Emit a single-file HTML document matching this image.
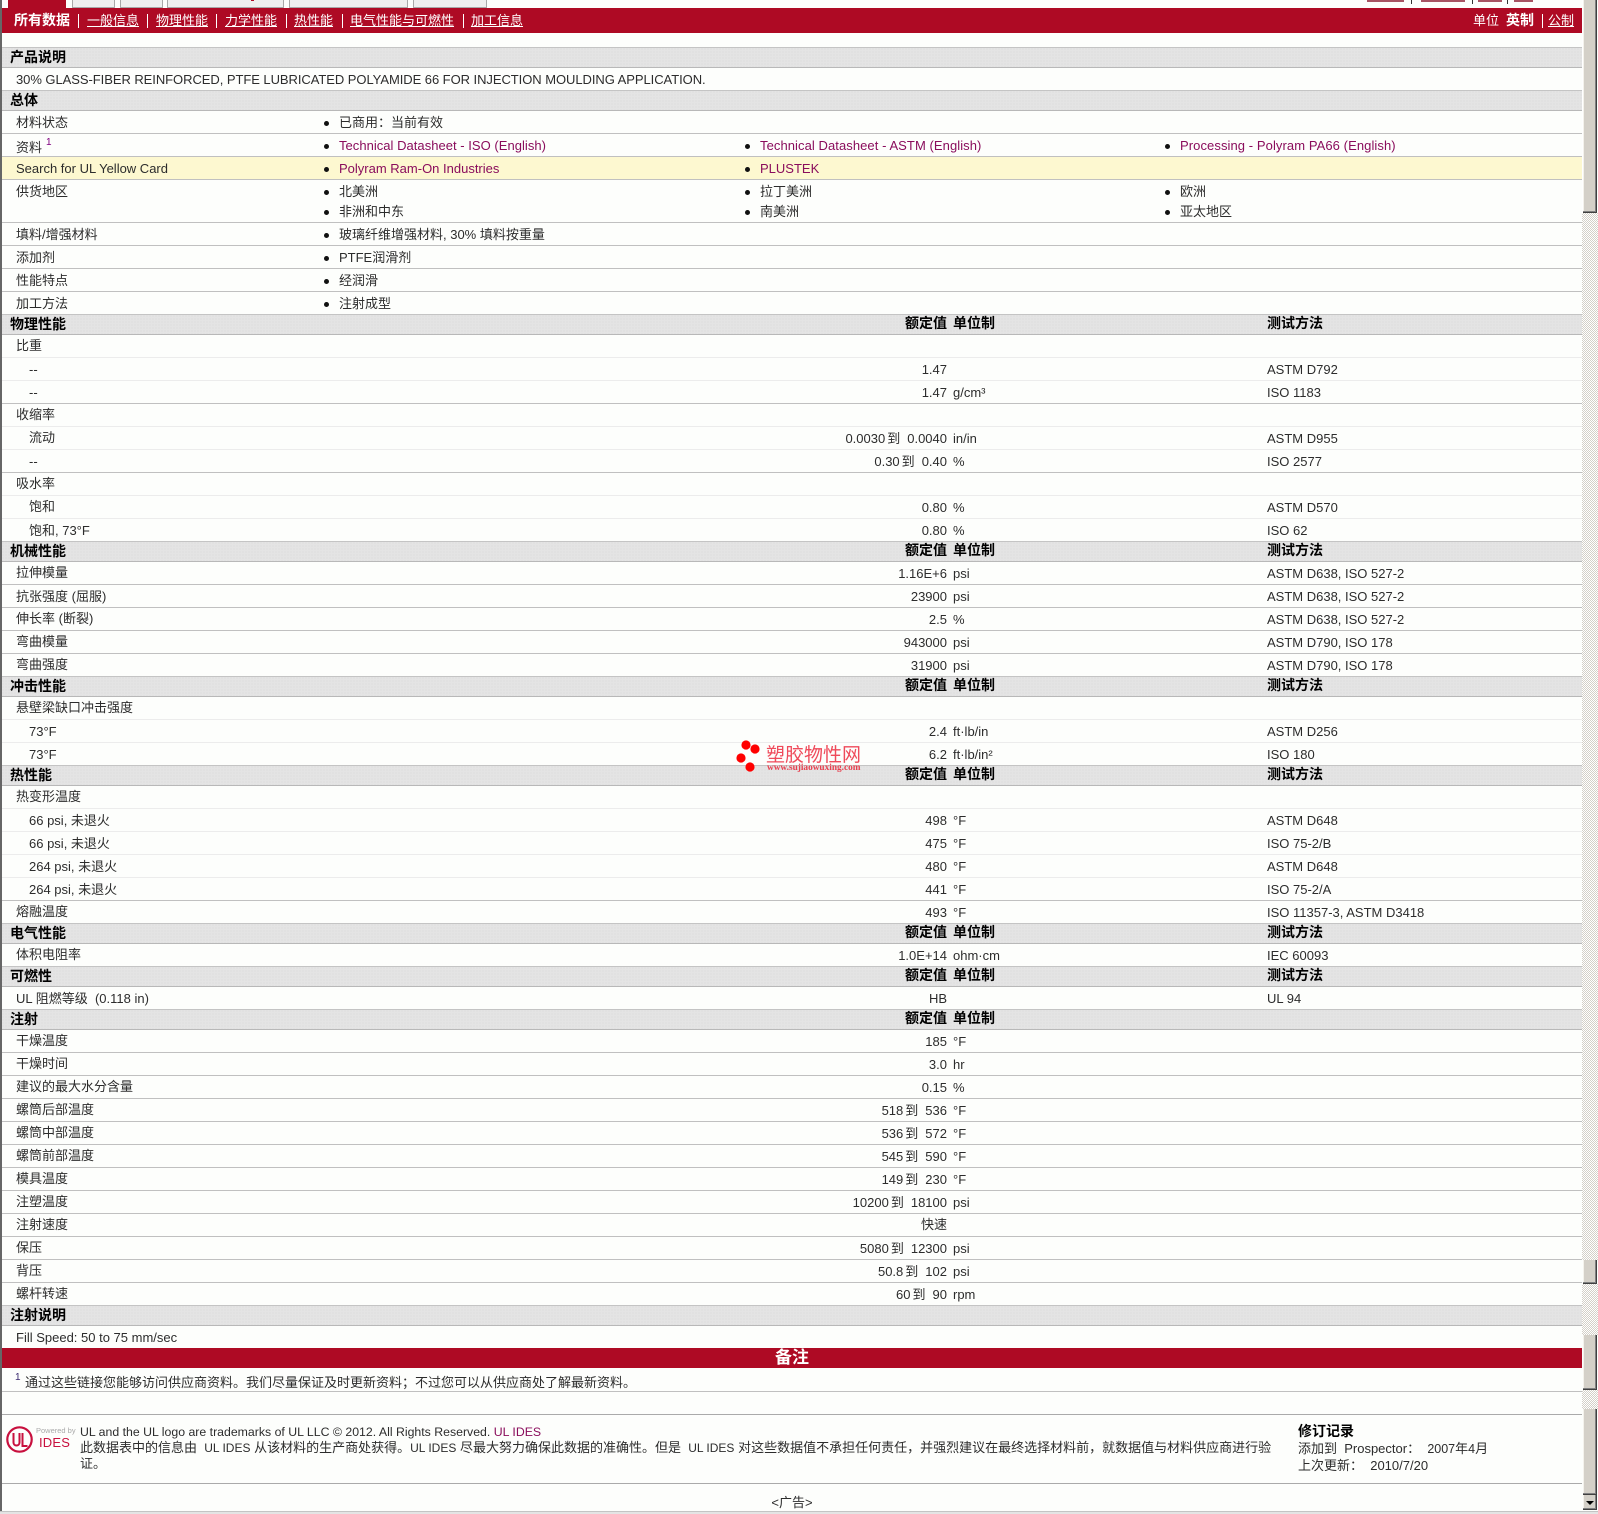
<!DOCTYPE html>
<html lang="zh">
<head>
<meta charset="utf-8">
<title>Polyram PA66</title>
<style>
html,body{margin:0;padding:0}
body{position:relative;width:1598px;height:1514px;overflow:hidden;background:#fdfefc;font:13px/22px "Liberation Sans","WenQuanYi Zen Hei","Noto Sans CJK SC",sans-serif;color:#2c2c2c}
a{color:#8a0d5c;text-decoration:none}
i{display:inline-block;width:7px}
i.k{width:2px}
.x{position:absolute;white-space:nowrap}
.r{position:absolute;left:2px;width:1580px;height:22px;border-bottom:1px solid #c0c0c0;white-space:nowrap}
.r.t{border-bottom-color:#ececec}
.r.y{background:#fdf8d0}
.r>span,.h>span{position:absolute;top:0}
.a{left:14px}
.s{left:27px}
.v{right:635px}
.u{left:951px}
.m{left:1265px}
.r>.v,.r>.u,.r>.m,.r>.p,.r>.a1{top:1px}
.h>.v,.h>.u,.h>.m{top:-1px}
.c1{left:337px}.c2{left:758px}.c3{left:1178px}
.p:before{content:"";position:absolute;left:-15px;top:9px;width:5px;height:5px;border-radius:50%;background:#111}
.h{position:absolute;left:2px;width:1580px;height:19px;border-top:1px solid #c4c4c4;border-bottom:1px solid #b8b8b8;background-color:#e4e4e4;background-image:radial-gradient(circle at 1px 1px,#dadada .6px,transparent .8px);background-size:3px 3px;font-size:14px;font-weight:bold;line-height:19px;color:#000;white-space:nowrap}
.h .a{left:8px}
.red{background-color:#b10a25;background-image:radial-gradient(circle at 1px 1px,#a40a22 .6px,transparent .8px);background-size:2px 2px}
.n{top:8px;line-height:25px;color:#fff;text-decoration:underline}
.d{top:8px;line-height:25px;color:#fff}
.b{font-weight:bold;font-size:14px;text-decoration:none}
.pipe{position:absolute;top:14px;width:1px;height:14px;background:#fff}
.ul{font-size:12px}
.tab{position:absolute;top:0;height:7px;background:#efefef;border:1px solid #a8a8a8;border-top:0;box-sizing:content-box}
.chk{position:absolute;left:1582px;width:16px;background:conic-gradient(#d4d0c8 25%,#fff 0 50%,#d4d0c8 0 75%,#fff 0) 0 0/2px 2px}
.th{position:absolute;left:1583px;width:13px;background:#d4d0c8;border-right:1px solid #404040;border-bottom:1px solid #404040;box-shadow:inset -1px -1px 0 #808080,inset 1px 0 0 #f4f2ec}
</style>
</head>
<body>
<!-- top tabs -->
<div class="x red" style="left:8px;top:0;width:58px;height:8px"></div>
<div class="tab" style="left:72px;width:41px"></div>
<div class="tab" style="left:120px;width:41px"></div>
<div class="tab" style="left:167px;width:115px"></div>
<div class="tab" style="left:289px;width:117px"></div>
<div class="tab" style="left:413px;width:72px"></div>
<div class="x" style="left:251px;top:0;width:3px;height:1px;background:#b10a25"></div>
<div class="x" style="left:1367px;top:0;width:37px;height:2px;background:#8a1a30;opacity:.75"></div>
<div class="x" style="left:1411px;top:0;width:1px;height:4px;background:#333"></div>
<div class="x" style="left:1421px;top:0;width:44px;height:2px;background:#8a1a30;opacity:.75"></div>
<div class="x" style="left:1472px;top:0;width:1px;height:4px;background:#333"></div>
<div class="x" style="left:1478px;top:0;width:24px;height:2px;background:#8a1a30;opacity:.75"></div>
<div class="x" style="left:1507px;top:0;width:1px;height:4px;background:#333"></div>
<div class="x" style="left:1514px;top:0;width:19px;height:2px;background:#8a1a30;opacity:.75"></div>

<!-- left edge -->
<div class="x" style="left:0;top:0;width:2px;height:1511px;background:#666"></div>

<!-- nav bar -->
<div class="x red" style="left:2px;top:8px;width:1580px;height:25px"></div>
<span class="x d b" style="left:14px">所有数据</span>
<div class="pipe" style="left:78px"></div>
<span class="x n" style="left:87px">一般信息</span>
<div class="pipe" style="left:147px"></div>
<span class="x n" style="left:156px">物理性能</span>
<div class="pipe" style="left:216px"></div>
<span class="x n" style="left:225px">力学性能</span>
<div class="pipe" style="left:286px"></div>
<span class="x n" style="left:294px">热性能</span>
<div class="pipe" style="left:342px"></div>
<span class="x n" style="left:350px">电气性能与可燃性</span>
<div class="pipe" style="left:463px"></div>
<span class="x n" style="left:471px">加工信息</span>
<span class="x d" style="left:1473px">单位</span>
<span class="x d b" style="left:1506px">英制</span>
<div class="pipe" style="left:1542px"></div>
<span class="x n" style="left:1548px">公制</span>

<!-- product description -->
<div class="h" style="top:47px"><span class="a">产品说明</span></div>
<div class="r" style="top:68px"><span class="a a1" style="letter-spacing:-.055px">30% GLASS-FIBER REINFORCED, PTFE LUBRICATED POLYAMIDE 66 FOR INJECTION MOULDING APPLICATION.</span></div>

<!-- general -->
<div class="h" style="top:90px"><span class="a">总体</span></div>
<div class="r" style="top:111px"><span class="a a1">材料状态</span><span class="p c1">已商用：当前有效</span></div>
<div class="r" style="top:134px"><span class="a" style="top:3px">资料</span><a class="x" href="#" style="left:44px;top:-2px;font-size:10px;color:#800080">1</a><span class="p c1" style="letter-spacing:.03px"><a href="#">Technical Datasheet - ISO (English)</a></span><span class="p c2" style="letter-spacing:.07px"><a href="#">Technical Datasheet - ASTM (English)</a></span><span class="p c3" style="letter-spacing:.08px"><a href="#">Processing - Polyram PA66 (English)</a></span></div>
<div class="r y" style="top:157px"><span class="a a1">Search for UL Yellow Card</span><span class="p c1"><a href="#">Polyram Ram-On Industries</a></span><span class="p c2"><a href="#">PLUSTEK</a></span></div>
<div class="r" style="top:180px;height:42px"><span class="a a1">供货地区</span><span class="p c1">北美洲</span><span class="p c2">拉丁美洲</span><span class="p c3">欧洲</span><span class="p c1" style="top:21px">非洲和中东</span><span class="p c2" style="top:21px">南美洲</span><span class="p c3" style="top:21px">亚太地区</span></div>
<div class="r" style="top:223px"><span class="a a1">填料/增强材料</span><span class="p c1">玻璃纤维增强材料, 30% 填料按重量</span></div>
<div class="r" style="top:246px"><span class="a a1">添加剂</span><span class="p c1">PTFE润滑剂</span></div>
<div class="r" style="top:269px"><span class="a a1">性能特点</span><span class="p c1">经润滑</span></div>
<div class="r" style="top:292px"><span class="a a1">加工方法</span><span class="p c1">注射成型</span></div>

<!-- physical -->
<div class="h" style="top:314px"><span class="a">物理性能</span><span class="v">额定值</span><span class="u">单位制</span><span class="m">测试方法</span></div>
<div class="r t" style="top:335px"><span class="a">比重</span></div>
<div class="r t" style="top:358px"><span class="s a1">--</span><span class="v">1.47</span><span class="m">ASTM D792</span></div>
<div class="r" style="top:381px"><span class="s a1">--</span><span class="v">1.47</span><span class="u">g/cm³</span><span class="m">ISO 1183</span></div>
<div class="r t" style="top:404px"><span class="a">收缩率</span></div>
<div class="r t" style="top:427px"><span class="s">流动</span><span class="v">0.0030<i class="k"></i>到<i></i>0.0040</span><span class="u">in/in</span><span class="m">ASTM D955</span></div>
<div class="r" style="top:450px"><span class="s a1">--</span><span class="v">0.30<i class="k"></i>到<i></i>0.40</span><span class="u">%</span><span class="m">ISO 2577</span></div>
<div class="r t" style="top:473px"><span class="a">吸水率</span></div>
<div class="r t" style="top:496px"><span class="s">饱和</span><span class="v">0.80</span><span class="u">%</span><span class="m">ASTM D570</span></div>
<div class="r" style="top:519px"><span class="s a1">饱和, 73°F</span><span class="v">0.80</span><span class="u">%</span><span class="m">ISO 62</span></div>

<!-- mechanical -->
<div class="h" style="top:541px"><span class="a">机械性能</span><span class="v">额定值</span><span class="u">单位制</span><span class="m">测试方法</span></div>
<div class="r" style="top:562px"><span class="a">拉伸模量</span><span class="v">1.16E+6</span><span class="u">psi</span><span class="m">ASTM D638, ISO 527-2</span></div>
<div class="r" style="top:585px"><span class="a a1">抗张强度 (屈服)</span><span class="v">23900</span><span class="u">psi</span><span class="m">ASTM D638, ISO 527-2</span></div>
<div class="r" style="top:608px"><span class="a">伸长率 (断裂)</span><span class="v">2.5</span><span class="u">%</span><span class="m">ASTM D638, ISO 527-2</span></div>
<div class="r" style="top:631px"><span class="a">弯曲模量</span><span class="v">943000</span><span class="u">psi</span><span class="m">ASTM D790, ISO 178</span></div>
<div class="r" style="top:654px"><span class="a">弯曲强度</span><span class="v">31900</span><span class="u">psi</span><span class="m">ASTM D790, ISO 178</span></div>

<!-- impact -->
<div class="h" style="top:676px"><span class="a">冲击性能</span><span class="v">额定值</span><span class="u">单位制</span><span class="m">测试方法</span></div>
<div class="r t" style="top:697px"><span class="a">悬壁梁缺口冲击强度</span></div>
<div class="r t" style="top:720px"><span class="s a1">73°F</span><span class="v">2.4</span><span class="u">ft·lb/in</span><span class="m">ASTM D256</span></div>
<div class="r" style="top:743px"><span class="s a1">73°F</span><span class="v">6.2</span><span class="u">ft·lb/in²</span><span class="m">ISO 180</span></div>

<!-- thermal -->
<div class="h" style="top:765px"><span class="a">热性能</span><span class="v">额定值</span><span class="u">单位制</span><span class="m">测试方法</span></div>
<div class="r t" style="top:786px"><span class="a">热变形温度</span></div>
<div class="r t" style="top:809px"><span class="s a1">66 psi, 未退火</span><span class="v">498</span><span class="u">°F</span><span class="m">ASTM D648</span></div>
<div class="r t" style="top:832px"><span class="s a1">66 psi, 未退火</span><span class="v">475</span><span class="u">°F</span><span class="m">ISO 75-2/B</span></div>
<div class="r t" style="top:855px"><span class="s a1">264 psi, 未退火</span><span class="v">480</span><span class="u">°F</span><span class="m">ASTM D648</span></div>
<div class="r" style="top:878px"><span class="s a1">264 psi, 未退火</span><span class="v">441</span><span class="u">°F</span><span class="m">ISO 75-2/A</span></div>
<div class="r" style="top:901px"><span class="a">熔融温度</span><span class="v">493</span><span class="u">°F</span><span class="m">ISO 11357-3, ASTM D3418</span></div>

<!-- electrical -->
<div class="h" style="top:923px"><span class="a">电气性能</span><span class="v">额定值</span><span class="u">单位制</span><span class="m">测试方法</span></div>
<div class="r" style="top:944px"><span class="a">体积电阻率</span><span class="v">1.0E+14</span><span class="u">ohm·cm</span><span class="m">IEC 60093</span></div>

<!-- flammability -->
<div class="h" style="top:966px"><span class="a">可燃性</span><span class="v">额定值</span><span class="u">单位制</span><span class="m">测试方法</span></div>
<div class="r" style="top:987px"><span class="a a1">UL 阻燃等级&nbsp;&nbsp;(0.118 in)</span><span class="v">HB</span><span class="m">UL 94</span></div>

<!-- injection -->
<div class="h" style="top:1009px"><span class="a">注射</span><span class="v">额定值</span><span class="u">单位制</span></div>
<div class="r" style="top:1030px"><span class="a">干燥温度</span><span class="v">185</span><span class="u">°F</span></div>
<div class="r" style="top:1053px"><span class="a">干燥时间</span><span class="v">3.0</span><span class="u">hr</span></div>
<div class="r" style="top:1076px"><span class="a">建议的最大水分含量</span><span class="v">0.15</span><span class="u">%</span></div>
<div class="r" style="top:1099px"><span class="a">螺筒后部温度</span><span class="v">518<i class="k"></i>到<i></i>536</span><span class="u">°F</span></div>
<div class="r" style="top:1122px"><span class="a">螺筒中部温度</span><span class="v">536<i class="k"></i>到<i></i>572</span><span class="u">°F</span></div>
<div class="r" style="top:1145px"><span class="a">螺筒前部温度</span><span class="v">545<i class="k"></i>到<i></i>590</span><span class="u">°F</span></div>
<div class="r" style="top:1168px"><span class="a">模具温度</span><span class="v">149<i class="k"></i>到<i></i>230</span><span class="u">°F</span></div>
<div class="r" style="top:1191px"><span class="a">注塑温度</span><span class="v">10200<i class="k"></i>到<i></i>18100</span><span class="u">psi</span></div>
<div class="r" style="top:1214px"><span class="a">注射速度</span><span class="v" style="top:0">快速</span></div>
<div class="r" style="top:1237px"><span class="a">保压</span><span class="v">5080<i class="k"></i>到<i></i>12300</span><span class="u">psi</span></div>
<div class="r" style="top:1260px"><span class="a">背压</span><span class="v">50.8<i class="k"></i>到<i></i>102</span><span class="u">psi</span></div>
<div class="r" style="top:1283px"><span class="a">螺杆转速</span><span class="v">60<i class="k"></i>到<i></i>90</span><span class="u">rpm</span></div>

<div class="h" style="top:1305px"><span class="a">注射说明</span></div>
<div class="r" style="top:1326px"><span class="a a1">Fill Speed: 50 to 75 mm/sec</span></div>

<!-- notes -->
<div class="x red" style="left:2px;top:1348px;width:1580px;height:20px;color:#fff;font-weight:bold;font-size:17px;line-height:20px;text-align:center">备注</div>
<div class="r" style="top:1369px"><a class="x" href="#" style="left:13px;top:-2px;font-size:10px;color:#3a2a70">1</a><span style="left:23px;top:3px">通过这些链接您能够访问供应商资料。我们尽量保证及时更新资料；不过您可以从供应商处了解最新资料。</span></div>
<div class="r" style="top:1392px;border-bottom-color:#aaa"></div>

<!-- footer -->
<svg class="x" style="left:5px;top:1425px" width="30" height="30" viewBox="0 0 30 30">
  <circle cx="14.5" cy="14.5" r="12.2" fill="none" stroke="#c8103e" stroke-width="2.2"/>
  <path d="M8.5 8v9.5a3 3 0 0 0 6 0V8M17.5 8v13h5" fill="none" stroke="#c8103e" stroke-width="2"/>
</svg>
<span class="x" style="left:36px;top:1426px;font-size:7.5px;line-height:9px;color:#aaa">Powered by</span>
<span class="x" style="left:39px;top:1435px;font-size:13px;line-height:15px;color:#c8103e;letter-spacing:.2px">IDES</span>
<div class="x" style="left:80px;top:1425px;line-height:15px;font-size:12.3px">UL and the UL logo are trademarks of UL LLC © 2012. All Rights Reserved. <a href="#">UL IDES</a></div>
<div class="x" style="left:80px;top:1440px;line-height:15px">此数据表中的信息由&nbsp;&nbsp;<span class="ul">UL IDES</span> 从该材料的生产商处获得。<span class="ul">UL IDES</span> 尽最大努力确保此数据的准确性。但是&nbsp;&nbsp;<span class="ul">UL IDES</span> 对这些数据值不承担任何责任，并强烈建议在最终选择材料前，就数据值与材料供应商进行验</div>
<div class="x" style="left:80px;top:1456px;line-height:15px">证。</div>
<div class="x" style="left:1298px;top:1424px;line-height:15px;font-size:14px;font-weight:bold;color:#000">修订记录</div>
<div class="x" style="left:1298px;top:1440px;line-height:17px">添加到&nbsp;&nbsp;Prospector：&nbsp;&nbsp;<span style="font-size:12.5px">2007</span>年<span style="font-size:12.5px">4</span>月</div>
<div class="x" style="left:1298px;top:1457px;line-height:17px">上次更新：&nbsp;&nbsp;2010/7/20</div>
<div class="x" style="left:2px;top:1483px;width:1580px;height:1px;background:#aaa"></div>
<div class="x" style="left:2px;top:1493px;width:1580px;text-align:center;line-height:20px">&lt;广告&gt;</div>
<div class="x" style="left:0;top:1511px;width:1598px;height:3px;background:#e4e4e4;border-top:1px solid #c4c4c4;box-sizing:border-box"></div>

<!-- watermark -->
<svg class="x" style="left:735px;top:738px" width="30" height="36" viewBox="0 0 30 36">
  <circle cx="11" cy="7" r="4.6" fill="#f00"/>
  <circle cx="20" cy="11" r="4.6" fill="#f00"/>
  <circle cx="6" cy="20" r="4.6" fill="#f00"/>
  <circle cx="15" cy="29" r="4.6" fill="#f00"/>
</svg>
<span class="x" style="left:766px;top:745px;font-size:19px;line-height:22px;color:#ef4a5a">塑胶物性网</span>
<span class="x" style="left:767px;top:763px;font:bold 9.3px/10px 'Liberation Serif',serif;color:#e8404f">www.sujiaowuxing.com</span>

<!-- scrollbars -->
<div class="x" style="left:1582px;top:0;width:1px;height:213px;background:#fff"></div>
<div class="th" style="top:0;height:212px"></div>
<div class="chk" style="top:213px;height:1047px"></div>
<div class="th" style="top:1260px;height:23px"></div>
<div class="chk" style="top:1284px;height:51px"></div>
<div class="th" style="top:1335px;height:54px"></div>
<div class="chk" style="top:1390px;height:19px"></div>
<div class="th" style="top:1409px;height:85px"></div>
<div class="th" style="top:1495px;height:14px"></div>
<div class="x" style="left:1586px;top:1501px;width:0;height:0;border-left:4px solid transparent;border-right:4px solid transparent;border-top:4px solid #000"></div>
</body>
</html>
